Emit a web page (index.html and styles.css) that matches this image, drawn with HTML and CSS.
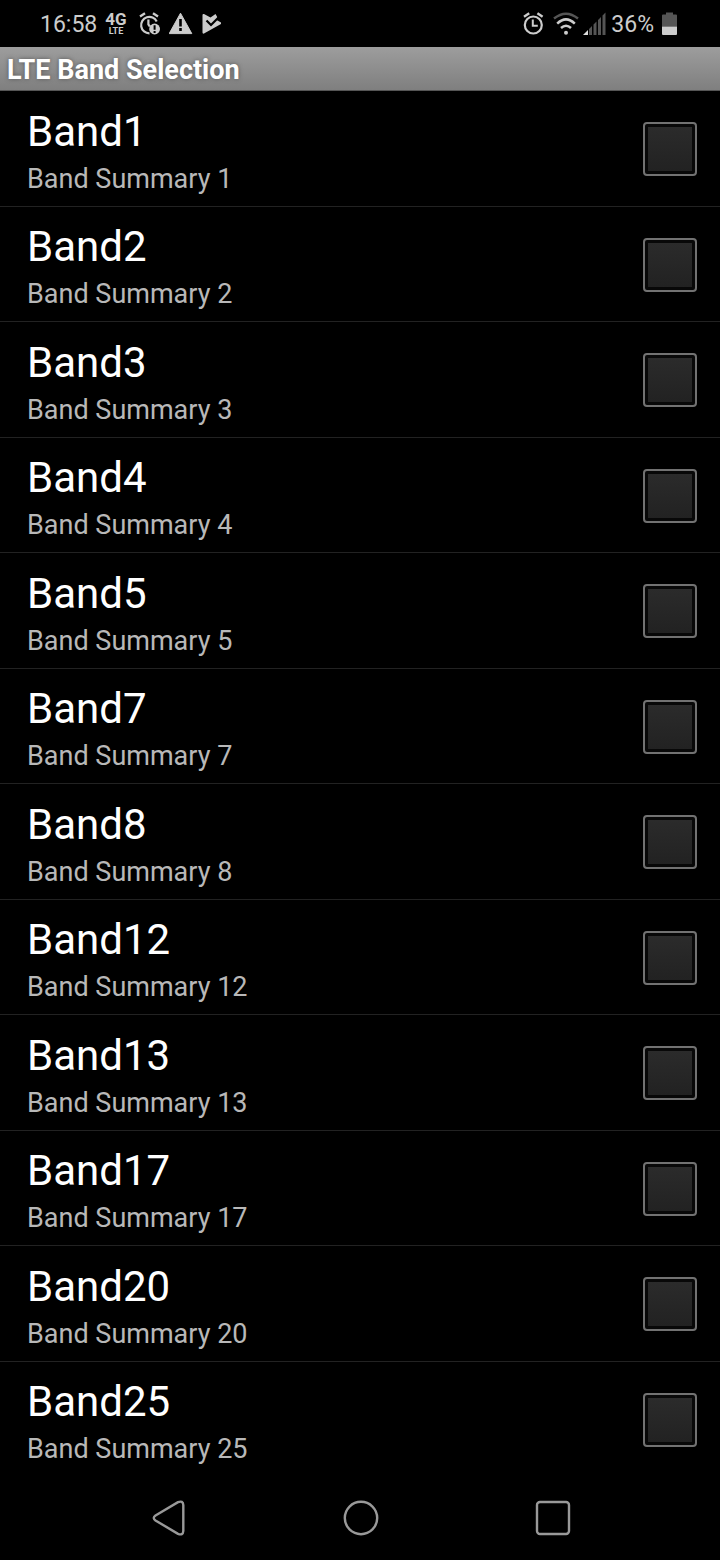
FILE: index.html
```html
<!DOCTYPE html>
<html lang="en">
<head>
<meta charset="utf-8">
<meta name="viewport" content="width=device-width, initial-scale=1">
<title>LTE Band Selection</title>
<link rel="stylesheet" href="styles.css">
</head>
<body>
<div class="screen">
  <div class="status">
    <div class="status-group status-left">
      <span class="time">16:58</span>
      <span class="network"><b class="network-gen">4G</b><b class="network-type">LTE</b></span>
      <svg class="icon" width="22" height="24" viewBox="0 0 22 24" aria-hidden="true">
        <path d="M1 4.5 6 1.2M14 1.2l5 3.3" fill="none" stroke="#ccc" stroke-width="2.4"/>
        <path d="M10.500 21.300A8.200 8.200 0 1 1 17.700 9.500M9.400 7.500v5l1.500 2" fill="none" stroke="#ccc" stroke-width="2.2"/>
        <circle cx="15.600" cy="17" r="5.400" fill="#ccc"/>
        <path d="M15.600 13.200v4.600M15.600 19v2" stroke="#000" stroke-width="2"/>
      </svg>
      <svg class="icon" width="24" height="24" viewBox="0 0 24 24" aria-hidden="true">
        <path d="M11.500 1.200 22.800 21.600H.2Z" fill="#ccc" stroke="#ccc" stroke-linejoin="round"/>
        <path d="M11.500 7v7.500M11.500 16v3" stroke="#000" stroke-width="2.6"/>
      </svg>
      <svg class="icon" width="20" height="24" viewBox="0 0 20 24" aria-hidden="true">
        <path d="M1.500 3.200Q1.500 1.600 3 2.100L9.500 5.500l5-3.400 2 3.300-1.300 2.400L20 10.400v1.700L3 21.500Q1.500 22 1.500 20.600Z" fill="#ccc"/>
        <path d="m5.500 8.500 4.500 4.500L18 5" fill="none" stroke="#000" stroke-width="2.200"/>
      </svg>
    </div>
    <div class="status-group status-right">
      <svg class="icon alarm" width="21" height="24" viewBox="0 0 21 24" aria-hidden="true">
        <path d="M1 4.700 6.200 1.200M14.400 1.200l5.200 3.500" fill="none" stroke="#ccc" stroke-width="2.400"/>
        <circle cx="10.300" cy="13" r="8.500" fill="none" stroke="#ccc" stroke-width="2.200"/>
        <path d="M9.800 7.500v6.300h5" fill="none" stroke="#ccc" stroke-width="2"/>
      </svg>
      <svg class="icon" width="26" height="24" viewBox="0 0 26 24" aria-hidden="true">
        <path d="M1 6.500Q13-3.200 25 6.500" fill="none" stroke="#555" stroke-width="2.400"/>
        <path d="M4.200 11.600Q13 3.200 21.800 11.600M8 16q5-4.600 10 0" fill="none" stroke="#ccc" stroke-width="2.500"/>
        <circle cx="13" cy="20.800" r="2" fill="#ccc"/>
      </svg>
      <svg class="icon" width="23" height="24" viewBox="0 0 23 24" aria-hidden="true">
        <path d="M0 23 5 18v5Z" fill="#ddd"/>
        <path d="M6 17l3-3v9H6ZM10.500 12.500l3-3V23h-3ZM15 8l3-3v18h-3ZM19.500 3.500l3-3V23h-3Z" fill="#555"/>
      </svg>
      <span class="percent">36%</span>
      <svg class="icon" width="15" height="24" viewBox="0 0 15 24" aria-hidden="true">
        <path d="M0 3.500Q0 2.500 1 2.500H4V.5h7v2h3q1 0 1 1V14.500H0Z" fill="#555"/>
        <path d="M0 14.500H15V22q0 1-1 1H1q-1 0-1-1Z" fill="#ccc"/>
      </svg>
    </div>
  </div>
  <h1 class="title-bar">LTE Band Selection</h1>
  <main class="bands">
    <label class="band"><span class="band-text"><span class="band-name">Band1</span><span class="band-summary">Band Summary 1</span></span><input class="band-check" type="checkbox"></label>
    <label class="band"><span class="band-text"><span class="band-name">Band2</span><span class="band-summary">Band Summary 2</span></span><input class="band-check" type="checkbox"></label>
    <label class="band"><span class="band-text"><span class="band-name">Band3</span><span class="band-summary">Band Summary 3</span></span><input class="band-check" type="checkbox"></label>
    <label class="band"><span class="band-text"><span class="band-name">Band4</span><span class="band-summary">Band Summary 4</span></span><input class="band-check" type="checkbox"></label>
    <label class="band"><span class="band-text"><span class="band-name">Band5</span><span class="band-summary">Band Summary 5</span></span><input class="band-check" type="checkbox"></label>
    <label class="band"><span class="band-text"><span class="band-name">Band7</span><span class="band-summary">Band Summary 7</span></span><input class="band-check" type="checkbox"></label>
    <label class="band"><span class="band-text"><span class="band-name">Band8</span><span class="band-summary">Band Summary 8</span></span><input class="band-check" type="checkbox"></label>
    <label class="band"><span class="band-text"><span class="band-name">Band12</span><span class="band-summary">Band Summary 12</span></span><input class="band-check" type="checkbox"></label>
    <label class="band"><span class="band-text"><span class="band-name">Band13</span><span class="band-summary">Band Summary 13</span></span><input class="band-check" type="checkbox"></label>
    <label class="band"><span class="band-text"><span class="band-name">Band17</span><span class="band-summary">Band Summary 17</span></span><input class="band-check" type="checkbox"></label>
    <label class="band"><span class="band-text"><span class="band-name">Band20</span><span class="band-summary">Band Summary 20</span></span><input class="band-check" type="checkbox"></label>
    <label class="band"><span class="band-text"><span class="band-name">Band25</span><span class="band-summary">Band Summary 25</span></span><input class="band-check" type="checkbox"></label>
  </main>
  <nav class="nav">
    <button class="nav-button" type="button" aria-label="Back"><svg width="36" height="36" viewBox="0 0 36 36"><path d="M4.500 15.500 27 2.200Q32 .2 32.300 5V31Q32 35.800 27 33.800L4.500 20.500Q1 18 4.500 15.500Z" fill="none" stroke="#999" stroke-width="2.400"/></svg></button>
    <button class="nav-button" type="button" aria-label="Home"><svg width="36" height="36" viewBox="0 0 36 36"><circle cx="18" cy="18" r="16.200" fill="none" stroke="#999" stroke-width="2.400"/></svg></button>
    <button class="nav-button" type="button" aria-label="Recent apps"><svg width="36" height="36" viewBox="0 0 36 36"><rect x="2" y="2" width="32" height="32" rx="3" fill="none" stroke="#999" stroke-width="2.400"/></svg></button>
  </nav>
</div>
</body>
</html>
```
FILE: styles.css
```css
* {
  box-sizing: border-box;
}

body {
  margin: 0;
  background: #000;
  color: #fff;
  font-family: Roboto, "Liberation Sans", sans-serif;
}

.screen {
  display: flex;
  flex-direction: column;
  min-height: 100vh;
}

.status {
  display: flex;
  justify-content: space-between;
  align-items: center;
  height: 47px;
  padding: 0 43px 0 40px;
  color: #ccc;
  font-size: 23px;
  line-height: 28px;
}

.status-group {
  display: flex;
  align-items: center;
}

.status-left {
  gap: 8px;
}

.status-right {
  gap: 4px;
}

.time,
.percent {
  padding-top: 2px;
}

.percent {
  margin: 0 4px 0 1px;
}

.icon {
  display: block;
}

.alarm {
  margin-right: 5px;
}

.network {
  display: flex;
  flex-direction: column;
  align-items: center;
  margin-right: 4px;
}

.network-gen {
  font-size: 17px;
  line-height: 16px;
}

.network-type {
  font-size: 9px;
  line-height: 9px;
}

.title-bar {
  height: 44px;
  margin: 0;
  padding: 1px 7px 0;
  border-bottom: 1px solid #555;
  background: linear-gradient(#9d9d9d, #7f7f7f);
  font-size: 27px;
  font-weight: 700;
  line-height: 44px;
  text-shadow: 0 0 4px #555;
}

.bands {
  display: grid;
  flex: 1;
  grid-auto-rows: 1fr;
}

.band {
  display: flex;
  justify-content: space-between;
  align-items: center;
  padding: 2px 23px 0 27px;
  border-bottom: 1px solid #222;
}

.band:last-child {
  border-bottom-color: transparent;
}

.band-text {
  display: flex;
  flex-direction: column;
  gap: 6px;
  padding-top: 3px;
}

.band-name {
  font-size: 42px;
  line-height: 50px;
}

.band-summary {
  color: #b8b8b8;
  font-size: 27px;
  line-height: 32px;
}

.band-check {
  appearance: none;
  width: 54px;
  height: 54px;
  margin: 0;
  padding: 3px;
  border: 2px solid #727272;
  border-radius: 4px;
  background: linear-gradient(#2b2b2b, #222) content-box, #080808;
}

.band-check:checked {
  background: #7cb518 content-box, #080808;
}

.nav {
  display: flex;
  justify-content: center;
  align-items: center;
  gap: 156px;
  height: 83px;
  padding: 0 0 2px 2px;
}

.nav-button {
  padding: 0;
  border: 0;
  background: none;
}

.nav-button svg {
  display: block;
}
```
